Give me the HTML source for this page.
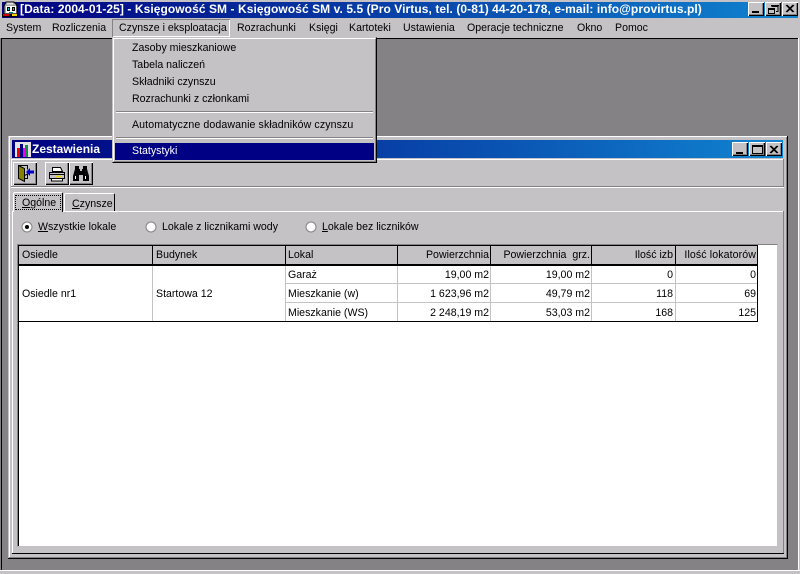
<!DOCTYPE html>
<html><head><meta charset="utf-8"><style>
html,body{margin:0;padding:0;background:#c4c2c4}
#p{position:relative;width:800px;height:574px;overflow:hidden;background:#c4c2c4;font:10.6px/13px "Liberation Sans",sans-serif;color:#000}
.b{position:absolute}
.t{position:absolute;white-space:nowrap}
.r{position:absolute;white-space:nowrap;text-align:right}
u{text-underline-offset:1px}
.btn{position:absolute;width:16px;height:14px;background:#c4c2c4;box-shadow:inset 1px 1px 0 #fff,inset -1px -1px 0 #000,inset -2px -2px 0 #848284}
svg{position:absolute;left:0;top:0;overflow:visible}
</style></head><body><div id="p">
<div class="b" style="left:2px;top:2px;width:796px;height:16px;background:linear-gradient(90deg,#000080,#1084d0)"></div>
<div class="t" style="left:20px;top:2px;font-size:12px;line-height:15px;font-weight:bold;color:#fff;letter-spacing:.07px">[Data: 2004-01-25] - Księgowość SM - Księgowość SM v. 5.5 (Pro Virtus, tel. (0-81) 44-20-178, e-mail: info@provirtus.pl)</div>

<svg width="20" height="18" style="left:2px;top:1px">
<path d="M4 1h8l2 2 1 2v8H2V5l1-2z" fill="#a8a6a8" stroke="#000"/>
<path d="M5 1.500h6v2H5z" fill="#e0e0e0"/>
<path d="M4 5h10v7H4z" fill="#fff"/>
<path d="M5 6h3v4H5z" fill="#000"/><path d="M10 6h3v4h-3z" fill="#000"/>
<path d="M6 7h1v2H6zM11 7h1v2h-1z" fill="#0cc"/>
<path d="M7 11h4v1H7z" fill="#008284"/>
<path d="M0 13h16v3H0z" fill="#000"/>
<path d="M1 13h6v2H1z" fill="#d00000"/><path d="M10 13h5v2h-5z" fill="#f8d000"/>
</svg>

<div class="btn" style="left:748px;top:2px"></div><div class="btn" style="left:765px;top:2px"></div><div class="btn" style="left:782px;top:2px"></div>
<svg width="800" height="30"><path d="M752 11h7v2h-7z" fill="#000"/><path d="M771.500 6.500h6.500v5h-2M771 5.500h8" stroke="#000" fill="none"/><path d="M768.500 8.500h6v5h-6z M768 9.500h7" stroke="#000" fill="#c4c2c4"/><path d="M786 5l7 7M787 5l7 7M793 5l-7 7M794 5l-7 7" stroke="#000"/></svg>

<div class="t" style="left:6px;top:22px">System</div>
<div class="t" style="left:52px;top:22px">Rozliczenia</div>
<div class="b" style="left:112px;top:19px;width:118px;height:18px;box-shadow:inset 1px 1px 0 #848284,inset -1px -1px 0 #fff"></div>
<div class="t" style="left:119px;top:22px">Czynsze i eksploatacja</div>
<div class="t" style="left:237px;top:22px">Rozrachunki</div>
<div class="t" style="left:309px;top:22px">Księgi</div>
<div class="t" style="left:349px;top:22px">Kartoteki</div>
<div class="t" style="left:403px;top:22px">Ustawienia</div>
<div class="t" style="left:467px;top:22px">Operacje techniczne</div>
<div class="t" style="left:577px;top:22px">Okno</div>
<div class="t" style="left:615px;top:22px">Pomoc</div>

<div class="b" style="left:0;top:38px;width:798px;height:533px;background:#848284"></div>
<div class="b" style="left:1px;top:38px;width:797px;height:1px;background:#000"></div>
<div class="b" style="left:1px;top:38px;width:1px;height:532px;background:#000"></div>
<div class="b" style="left:0;top:570px;width:800px;height:1px;background:#fff"></div>
<div class="b" style="left:798px;top:38px;width:1px;height:533px;background:#fff"></div>

<div class="b" style="left:8px;top:136px;width:780px;height:423px;background:#c4c2c4"></div>
<div class="b" style="left:9px;top:136px;width:778px;height:1px;background:#fff"></div>
<div class="b" style="left:9px;top:137px;width:1px;height:420px;background:#fff"></div>
<div class="b" style="left:787px;top:136px;width:1px;height:423px;background:#000"></div>
<div class="b" style="left:8px;top:558px;width:780px;height:1px;background:#000"></div>
<div class="b" style="left:786px;top:137px;width:1px;height:421px;background:#848284"></div>
<div class="b" style="left:9px;top:557px;width:778px;height:1px;background:#848284"></div>

<div class="b" style="left:12px;top:140px;width:771px;height:18px;background:linear-gradient(90deg,#000080,#1084d0)"></div>
<svg width="16" height="16" style="left:15px;top:142px"><path d="M0 0h16v15H0z" fill="#e4e2e4"/><path d="M2 6h3v9H2z" fill="#f00000"/><path d="M5 2h3v13H5z" fill="#000084"/><path d="M8 6h2v9H8z" fill="#f000f0"/><path d="M10 3h3v12h-3z" fill="#089040"/></svg>
<div class="t" style="left:32px;top:141px;font-size:12px;line-height:16px;font-weight:bold;color:#fff">Zestawienia</div>
<div class="btn" style="left:732px;top:142px"></div><div class="btn" style="left:749px;top:142px"></div><div class="btn" style="left:766px;top:142px"></div>
<svg width="800" height="160"><path d="M736 152h7v2h-7z" fill="#000"/><path d="M752.500 145.500h10v8h-10z M752 146.500h11" stroke="#000" fill="none"/><path d="M770 146l7 7M771 146l7 7M777 146l-7 7M778 146l-7 7" stroke="#000"/></svg>

<div class="b" style="left:11px;top:159px;width:773px;height:1px;background:#fff"></div>
<div class="b" style="left:11px;top:159px;width:1px;height:28px;background:#fff"></div>
<div class="b" style="left:783px;top:159px;width:1px;height:28px;background:#848284"></div>
<div class="b" style="left:11px;top:186px;width:773px;height:1px;background:#848284"></div>
<div class="b" style="left:11px;top:187px;width:773px;height:1px;background:#fff"></div>

<div class="b" style="left:13px;top:162px;width:24px;height:23px;box-shadow:inset 1px 1px 0 #fff,inset -1px -1px 0 #000,inset -2px -2px 0 #848284"></div>
<div class="b" style="left:45px;top:162px;width:24px;height:23px;box-shadow:inset 1px 1px 0 #fff,inset -1px -1px 0 #000,inset -2px -2px 0 #848284"></div>
<div class="b" style="left:69px;top:162px;width:24px;height:23px;box-shadow:inset 1px 1px 0 #fff,inset -1px -1px 0 #000,inset -2px -2px 0 #848284"></div>
<svg width="100" height="190">
<path d="M18.500 165.500h9v4M27.500 174v4.500h-9z" stroke="#000" fill="none"/>
<path d="M18.500 165.500l6 3v13l-6-3z" fill="#848200" stroke="#000"/>
<path d="M26 172l4-4v2.500h4v3h-4v2.500z" fill="#0000c8"/>
<path d="M52.500 167.500h8l2 4h-10z" fill="#fff" stroke="#000"/>
<path d="M49.500 172.500h15v6h-15z" fill="#c4c2c4" stroke="#000"/>
<path d="M51.500 178.500h11v2.500h-11z" fill="#fff" stroke="#000"/>
<path d="M50 174.500h14" stroke="#000"/><path d="M56 176.500h6" stroke="#e8d800" stroke-width="1.500"/>
<path d="M73 176l2-7v-3h4v3h1v2h2v-2h1v-3h4v3l2 7v5h-6v-6h-4v6h-6z" fill="#000"/>
<path d="M75 176h1v3h-1zM85 176h1v3h-1z" fill="#fff"/>
</svg>

<div class="b" style="left:13px;top:211px;width:771px;height:1px;background:#fff"></div>
<div class="b" style="left:12px;top:211px;width:1px;height:343px;background:#fff"></div>
<div class="b" style="left:783px;top:211px;width:1px;height:343px;background:#848284"></div>
<div class="b" style="left:12px;top:553px;width:772px;height:1px;background:#000"></div>

<div class="b" style="left:13px;top:192px;width:50px;height:20px;background:#c4c2c4;border-left:1px solid #fff;border-top:1px solid #fff;border-right:1px solid #000;box-sizing:border-box;border-radius:2px 2px 0 0"></div>
<div class="b" style="left:15px;top:195px;width:46px;height:15px;box-sizing:border-box;border:1px dotted #000"></div>
<div class="t" style="left:22px;top:197px"><u>O</u>gólne</div>
<div class="b" style="left:64px;top:193px;width:51px;height:18px;background:#c4c2c4;border-left:1px solid #fff;border-top:1px solid #fff;border-right:1px solid #000;box-sizing:border-box;border-radius:2px 2px 0 0"></div>
<div class="t" style="left:72px;top:198px"><u>C</u>zynsze</div>

<svg width="800" height="240">
<g fill="#fff" stroke="#848284"><circle cx="27" cy="227" r="5"/><circle cx="151" cy="227" r="5"/><circle cx="311" cy="227" r="5"/></g>
<circle cx="27" cy="227" r="2" fill="#000"/>
</svg>
<div class="t" style="left:38px;top:221px"><u>W</u>szystkie lokale</div>
<div class="t" style="left:162px;top:221px">Lokale z licznikami wody</div>
<div class="t" style="left:322px;top:221px"><u>L</u>okale bez liczników</div>

<div class="b" style="left:17px;top:244px;width:761px;height:303px;background:#fff;box-sizing:border-box;border-top:1px solid #848284;border-left:1px solid #848284;border-right:1px solid #c4c2c4;border-bottom:1px solid #c4c2c4"></div>
<div class="b" style="left:18px;top:245px;width:740px;height:1px;background:#000"></div>
<div class="b" style="left:18px;top:245px;width:1px;height:301px;background:#000"></div>
<div class="b" style="left:19px;top:246px;width:739px;height:18px;background:#c4c2c4"></div>
<div class="b" style="left:19px;top:264px;width:739px;height:2px;background:#000"></div>
<div class="b" style="left:19px;top:321px;width:739px;height:1px;background:#000"></div>
<div class="b" style="left:757px;top:246px;width:1px;height:76px;background:#000"></div>
<div class="b" style="left:285px;top:283px;width:472px;height:1px;background:#c4c2c4"></div>
<div class="b" style="left:285px;top:302px;width:472px;height:1px;background:#c4c2c4"></div>

<div class="b" style="left:152px;top:246px;width:1px;height:18px;background:#000"></div>
<div class="b" style="left:285px;top:246px;width:1px;height:18px;background:#000"></div>
<div class="b" style="left:397px;top:246px;width:1px;height:18px;background:#000"></div>
<div class="b" style="left:490px;top:246px;width:1px;height:18px;background:#000"></div>
<div class="b" style="left:591px;top:246px;width:1px;height:18px;background:#000"></div>
<div class="b" style="left:675px;top:246px;width:1px;height:18px;background:#000"></div>
<div class="b" style="left:152px;top:266px;width:1px;height:55px;background:#c4c2c4"></div>
<div class="b" style="left:285px;top:266px;width:1px;height:55px;background:#c4c2c4"></div>
<div class="b" style="left:397px;top:266px;width:1px;height:55px;background:#c4c2c4"></div>
<div class="b" style="left:490px;top:266px;width:1px;height:55px;background:#c4c2c4"></div>
<div class="b" style="left:591px;top:266px;width:1px;height:55px;background:#c4c2c4"></div>
<div class="b" style="left:675px;top:266px;width:1px;height:55px;background:#c4c2c4"></div>

<div class="t" style="left:22px;top:249px">Osiedle</div>
<div class="t" style="left:156px;top:249px">Budynek</div>
<div class="t" style="left:288px;top:249px">Lokal</div>
<div class="r" style="right:311px;top:249px">Powierzchnia</div>
<div class="r" style="right:210px;top:249px;white-space:pre">Powierzchnia  grz.</div>
<div class="r" style="right:127px;top:249px">Ilość izb</div>
<div class="r" style="right:44px;top:249px;letter-spacing:.1px">Ilość lokatorów</div>

<div class="t" style="left:22px;top:288px">Osiedle nr1</div>
<div class="t" style="left:156px;top:288px">Startowa 12</div>
<div class="t" style="left:288px;top:269px">Garaż</div>
<div class="t" style="left:288px;top:288px">Mieszkanie (w)</div>
<div class="t" style="left:288px;top:307px">Mieszkanie (WS)</div>
<div class="r" style="right:311px;top:269px">19,00 m2</div>
<div class="r" style="right:311px;top:288px">1 623,96 m2</div>
<div class="r" style="right:311px;top:307px">2 248,19 m2</div>
<div class="r" style="right:210px;top:269px">19,00 m2</div>
<div class="r" style="right:210px;top:288px">49,79 m2</div>
<div class="r" style="right:210px;top:307px">53,03 m2</div>
<div class="r" style="right:127px;top:269px">0</div>
<div class="r" style="right:127px;top:288px">118</div>
<div class="r" style="right:127px;top:307px">168</div>
<div class="r" style="right:44px;top:269px">0</div>
<div class="r" style="right:44px;top:288px">69</div>
<div class="r" style="right:44px;top:307px">125</div>

<div class="b" style="left:112px;top:37px;width:265px;height:126px;background:#c4c2c4;box-sizing:border-box;border-left:1px solid #c4c2c4;border-top:1px solid #c4c2c4;border-right:1px solid #000;border-bottom:1px solid #000"></div>
<div class="b" style="left:113px;top:38px;width:263px;height:124px;box-sizing:border-box;border-left:1px solid #fff;border-top:1px solid #fff;border-right:1px solid #848284;border-bottom:1px solid #848284"></div>
<div class="t" style="left:132px;top:42px">Zasoby mieszkaniowe</div>
<div class="t" style="left:132px;top:59px">Tabela naliczeń</div>
<div class="t" style="left:132px;top:76px">Składniki czynszu</div>
<div class="t" style="left:132px;top:93px">Rozrachunki z członkami</div>
<div class="b" style="left:116px;top:111px;width:257px;height:1px;background:#848284"></div>
<div class="b" style="left:116px;top:112px;width:257px;height:1px;background:#fff"></div>
<div class="t" style="left:132px;top:119px;letter-spacing:.1px">Automatyczne dodawanie składników czynszu</div>
<div class="b" style="left:116px;top:137px;width:257px;height:1px;background:#848284"></div>
<div class="b" style="left:116px;top:138px;width:257px;height:1px;background:#fff"></div>
<div class="b" style="left:115px;top:143px;width:259px;height:17px;background:#000084"></div>
<div class="t" style="left:132px;top:145px;color:#fff">Statystyki</div>
</div></body></html>
